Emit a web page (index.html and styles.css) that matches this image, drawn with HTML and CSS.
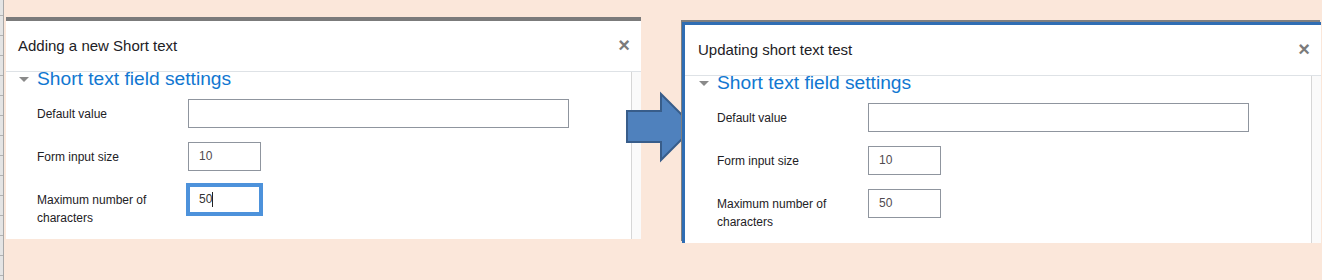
FILE: index.html
```html
<!DOCTYPE html>
<html lang="en">
<head>
    <meta charset="UTF-8">
    <title>Short text field settings</title>
    <link rel="stylesheet" href="styles.css">
</head>
<body>
    <div class="page">
        <div class="ruler"></div>

        <!-- Before: adding a new field -->
        <section class="dialog dialog-add">
            <header class="dialog-header">
                <h2 class="dialog-title">Adding a new Short text</h2>
                <span class="dialog-close">×</span>
            </header>
            <div class="dialog-body">
                <div class="dialog-content">
                    <h3 class="section-title"><span class="caret"></span>Short text field settings</h3>
                    <div class="form-row">
                        <label class="form-label">Default value</label>
                        <div class="field field-wide"></div>
                    </div>
                    <div class="form-row">
                        <label class="form-label">Form input size</label>
                        <div class="field field-small">10</div>
                    </div>
                    <div class="form-row">
                        <label class="form-label">Maximum number of characters</label>
                        <div class="field field-small field-focus">50<span class="text-cursor"></span></div>
                    </div>
                </div>
                <div class="scroll-track"></div>
            </div>
        </section>

        <!-- After: updating the saved field -->
        <section class="dialog dialog-edit">
            <header class="dialog-header">
                <h2 class="dialog-title">Updating short text test</h2>
                <span class="dialog-close">×</span>
            </header>
            <div class="dialog-body">
                <div class="dialog-content">
                    <h3 class="section-title"><span class="caret"></span>Short text field settings</h3>
                    <div class="form-row">
                        <label class="form-label">Default value</label>
                        <div class="field field-wide"></div>
                    </div>
                    <div class="form-row">
                        <label class="form-label">Form input size</label>
                        <div class="field field-small">10</div>
                    </div>
                    <div class="form-row">
                        <label class="form-label">Maximum number of characters</label>
                        <div class="field field-small">50</div>
                    </div>
                </div>
                <div class="scroll-track"></div>
            </div>
        </section>

        <svg class="arrow" width="74" height="74" viewBox="0 0 74 74">
            <polygon points="3,21 37,21 37,4 70,37 37,70 37,52 3,52" fill="#4f81bd" stroke="#385d8a" stroke-width="2"/>
        </svg>
    </div>
</body>
</html>
```

FILE: styles.css
```css
* {
    box-sizing: border-box;
}
body {
    margin: 0;
    background: #fbe7da;
    font-family: 'Liberation Sans', Arial, sans-serif;
    color: #1d2125;
}
.page {
    position: relative;
    display: flex;
    align-items: flex-start;
    height: 280px;
    overflow: hidden;
}
.ruler {
    flex-shrink: 0;
    width: 4px;
    height: 280px;
    border-right: 1px solid #a8a8a8;
    background: repeating-linear-gradient(#e4e4e4 0 15px, #b3b3b3 15px 16px, #e4e4e4 16px 20px);
}
.dialog {
    flex-shrink: 0;
    background: #fff;
}
.dialog-add {
    width: 635px;
    margin: 17px 0 0 2px;
    border-top: 4px solid #7b7b7b;
}
.dialog-edit {
    position: relative;
    z-index: 2;
    width: 639px;
    margin: 22px 0 0 41px;
    border-top: 3px solid #2f6db3;
    border-left: 3px solid #2f6db3;
    box-shadow: -1px -2px 0 #7f7f7f;
}
.dialog-header {
    display: flex;
    align-items: center;
    justify-content: space-between;
    height: 51px;
    padding: 0 11px 2px 12px;
    border-bottom: 1px solid #dee2e6;
}
.dialog-edit .dialog-header {
    padding-left: 13px;
}
.dialog-title {
    margin: 0;
    font-size: 15px;
    font-weight: 400;
}
.dialog-close {
    font-size: 20px;
    font-weight: 700;
    line-height: 1;
    color: #7b7b7b;
}
.dialog-body {
    display: flex;
}
.dialog-content {
    flex: 1;
    padding-bottom: 12px;
}
.dialog-edit .dialog-content {
    padding-left: 1px;
}
.scroll-track {
    width: 10px;
    border-left: 1px solid #d6d6d6;
    background: #fafafa;
}
.section-title {
    display: flex;
    align-items: center;
    margin: -4px 0 9px;
    padding-left: 13px;
    font-size: 19.2px;
    line-height: 22px;
    font-weight: 400;
    color: #1177d1;
}
.caret {
    width: 0;
    height: 0;
    margin-right: 8px;
    border-left: 5px solid transparent;
    border-right: 5px solid transparent;
    border-top: 5px solid #8a8a8a;
}
.form-row {
    display: flex;
    align-items: flex-start;
    padding-left: 31px;
    margin-bottom: 14px;
}
.form-row:last-child {
    margin-bottom: 0;
}
.form-label {
    width: 151px;
    padding: 6px 20px 0 0;
    font-size: 12px;
    line-height: 18px;
}
.field {
    height: 29px;
    padding: 0 10px;
    border: 1px solid #8f959e;
    font-size: 12px;
    line-height: 27px;
    color: #504a4f;
}
.field-wide {
    width: 381px;
}
.field-small {
    width: 73px;
}
.field-focus {
    border-color: #4d92db;
    box-shadow: 0 0 0 2px #4d92db, inset 0 0 0 1px #4d92db;
    color: #333;
}
.text-cursor {
    display: inline-block;
    width: 1px;
    height: 15px;
    background: #222;
    vertical-align: middle;
}
.arrow {
    position: absolute;
    left: 624px;
    top: 90px;
    z-index: 1;
}
```
